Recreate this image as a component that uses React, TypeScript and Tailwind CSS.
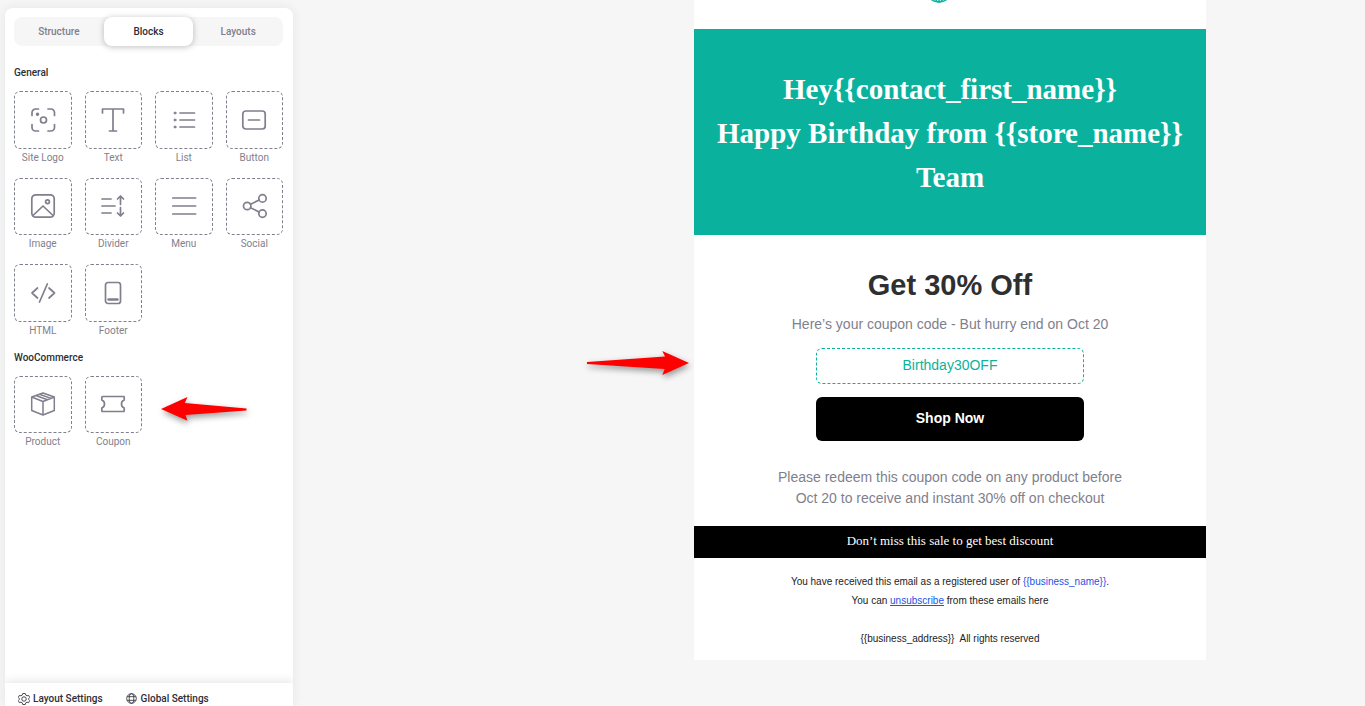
import React, { useState } from 'react';

type Block = {
  label: string;
  icon: React.ReactNode;
};

const generalBlocks: Block[] = [
  {
    label: 'Site Logo',
    icon: (
      <>
        <path d="M1 7.5V4.5A3.5 3.5 0 0 1 4.5 1h3M17 1h3A3.5 3.5 0 0 1 23.500 4.500V7.500M23.500 16.500v3a3.500 3.500 0 0 1-3.500 3.500h-3M7.500 23H4.500A3.500 3.500 0 0 1 1 19.500v-3" />
        <circle cx="12.5" cy="12" r="3" />
        <circle cx="6.5" cy="6.3" r="0.9" fill="currentColor" />
      </>
    ),
  },
  {
    label: 'Text',
    icon: <path d="M1.5 5V1h21v4M12 1v22M8.5 23h7" />,
  },
  {
    label: 'List',
    icon: (
      <>
        <path d="M8 5h14.5M8 12h14.5M8 19h14.5" />
        <g fill="currentColor" strokeWidth="1">
          <circle cx="3" cy="5" r="1" />
          <circle cx="3" cy="12" r="1" />
          <circle cx="3" cy="19" r="1" />
        </g>
      </>
    ),
  },
  {
    label: 'Button',
    icon: (
      <>
        <rect x="0.8" y="3" width="22.4" height="18" rx="3" />
        <path d="M6.5 12h11" />
      </>
    ),
  },
  {
    label: 'Image',
    icon: (
      <>
        <rect x="0.8" y="0.8" width="22.4" height="22.4" rx="4" />
        <circle cx="16.5" cy="7.8" r="1.9" />
        <path d="M2 21.5l10-9.5 10 9.5" />
      </>
    ),
  },
  {
    label: 'Divider',
    icon: (
      <>
        <path d="M1 5h9M1 12h13M1 19h9" />
        <path d="M19.5 10.5v-8M16.500 5l3-3 3 3M19.5 13.5v8M16.500 19l3 3 3-3" />
      </>
    ),
  },
  {
    label: 'Menu',
    icon: <path d="M0.8 4h22.8M0.8 12h22.8M0.8 20h22.8" />,
  },
  {
    label: 'Social',
    icon: (
      <>
        <circle cx="5.2" cy="12" r="3.7" />
        <circle cx="20.5" cy="4.4" r="3.7" />
        <circle cx="20.5" cy="19.6" r="3.7" />
        <path d="M8.5 10.3l8.7-4.3M8.5 13.7l8.7 4.3" />
      </>
    ),
  },
  {
    label: 'HTML',
    icon: <path d="M6.5 7L1 12l5.5 5M18 7l5.5 5-5.5 5M16.3 3L8.5 21" />,
  },
  {
    label: 'Footer',
    icon: (
      <>
        <rect x="4.5" y="1.5" width="15" height="21" rx="2.5" />
        <path d="M7.5 18.5h9" strokeWidth="2.4" />
      </>
    ),
  },
];

const wooBlocks: Block[] = [
  {
    label: 'Product',
    icon: (
      <path
        d="M12 1l11.300 4v13.500L12 23 .7 18.500V5zM.7 5L12 9.500 23.300 5M12 9.500V23M4.800 3.500l11.700 4.300M8.500 2.200l11.500 4.200"
        strokeWidth="1.5"
      />
    ),
  },
  {
    label: 'Coupon',
    icon: <path d="M1.5 4.5h21a.7.7 0 0 1 .7.7v2.800a4.300 4.300 0 0 0 0 8v2.800a.7.7 0 0 1-.7.7h-21a.7.7 0 0 1-.7-.7V16a4.300 4.300 0 0 0 0-8V5.200a.7.7 0 0 1 .7-.7z" />,
  },
];

const tabs = ['Structure', 'Blocks', 'Layouts'];

const BlockGrid: React.FC<{ blocks: Block[] }> = ({ blocks }) => (
  <div className="grid grid-cols-4 gap-[13px]">
    {blocks.map((block) => (
      <button key={block.label} type="button" className="flex flex-col items-center text-[#7f7f8d]">
        <span className="flex aspect-square w-full items-center justify-center rounded-md border border-dashed border-[#7f7f8d]">
          <svg
            viewBox="0 0 24 24"
            className="h-6 w-6 overflow-visible"
            fill="none"
            stroke="currentColor"
            strokeWidth="1.7"
            strokeLinecap="round"
            strokeLinejoin="round"
            aria-hidden="true"
          >
            {block.icon}
          </svg>
        </span>
        <span className="mt-px text-[10px] leading-[15px]">{block.label}</span>
      </button>
    ))}
  </div>
);

const Sidebar: React.FC = () => {
  const [activeTab, setActiveTab] = useState<string>('Blocks');

  return (
    <aside className="flex w-72 shrink-0 flex-col overflow-hidden rounded-t-lg bg-white font-['Roboto',sans-serif] shadow-[0_0_12px_rgba(30,40,60,0.08)]">
      <div className="flex-1 pt-[9px] pr-[10px] pl-[9px]">
        <div className="flex rounded-lg bg-[#f6f6f6]" role="tablist">
          {tabs.map((tab) => (
            <button
              key={tab}
              type="button"
              role="tab"
              aria-selected={tab === activeTab}
              onClick={() => setActiveTab(tab)}
              className={
                tab === activeTab
                  ? 'flex-1 rounded-lg bg-white py-[7px] text-[10px] leading-[15px] font-medium text-[#2d2d35] shadow-[0_1px_6px_rgba(0,0,0,0.25)]'
                  : 'flex-1 py-[7px] text-[10px] leading-[15px] font-medium text-[#7f7f8d]'
              }
            >
              {tab}
            </button>
          ))}
        </div>

        <h2 className="mt-[19px] mb-[11px] text-[10px] leading-[15px] font-medium text-[#2d2d35]">General</h2>
        <BlockGrid blocks={generalBlocks} />

        <h2 className="mt-3 mb-[11px] text-[10px] leading-[15px] font-medium text-[#2d2d35]">WooCommerce</h2>
        <div className="relative">
          <BlockGrid blocks={wooBlocks} />
          <svg
            viewBox="0 0 86 24"
            className="absolute top-[21px] left-[147px] h-6 w-[86px] overflow-visible drop-shadow-[1px_3px_3px_rgba(0,0,0,0.4)]"
            aria-hidden="true"
          >
            <path d="M0 12L26.5 0l-2.7 6L85.5 11.4v2L24.5 18l2 5.8z" fill="#ff0000" />
          </svg>
        </div>
      </div>

      <div className="flex gap-[23px] bg-white px-[13px] pt-2 shadow-[0_-2px_10px_rgba(0,0,0,0.1)]">
        <button type="button" className="flex items-center gap-[3px] text-[10px] leading-[15px] font-medium text-[#2d2d35]">
          <svg viewBox="0 0 24 24" className="h-3 w-3" fill="none" stroke="currentColor" strokeWidth="1.7" aria-hidden="true">
            <path d="M9.5 1h5l1 3.2 2.5 1.4 3.2-.8 2.3 4-2.2 2.6v1.2l2.2 2.6-2.3 4-3.2-.8-2.5 1.4-1 3.2h-5l-1-3.2L6 18.4l-3.2.8-2.3-4 2.2-2.6v-1.200L.5 8.800l2.300-4 3.200.8 2.500-1.400z" />
            <circle cx="12" cy="12" r="4.5" />
          </svg>
          Layout Settings
        </button>
        <button type="button" className="flex items-center gap-1 text-[10px] leading-[15px] font-medium text-[#2d2d35]">
          <svg viewBox="0 0 24 24" className="h-[11px] w-[11px]" fill="none" stroke="currentColor" strokeWidth="1.8" aria-hidden="true">
            <circle cx="12" cy="12" r="10.5" />
            <ellipse cx="12" cy="12" rx="5" ry="10.5" />
            <path d="M2.5 8h19M2.5 16h19" />
          </svg>
          Global Settings
        </button>
      </div>
    </aside>
  );
};

const EmailPreview: React.FC = () => (
  <article className="w-full max-w-lg bg-white text-center font-['Liberation_Sans',Arial,sans-serif]">
    {/* store logo, scrolled mostly out of view */}
    <header className="flex h-[29px] items-end justify-center overflow-hidden pr-[22px] pb-[26px]">
      <svg viewBox="0 0 28 28" className="h-7 w-7 shrink-0" fill="none" stroke="#0ab29e" strokeWidth="1.5" aria-hidden="true">
        <circle cx="14" cy="14" r="13" />
        <ellipse cx="14" cy="14" rx="6" ry="13" />
        <path d="M14 1v26M1 14h26M3 8h22M3 20h22" />
      </svg>
    </header>

    <h1 className="bg-[#0ab29e] px-4 pt-[38px] pb-9 font-['Liberation_Serif','Times_New_Roman',serif] text-[29px] leading-[44px] font-bold text-white">
      Hey{'{{contact_first_name}}'}
      <br />
      Happy Birthday from {'{{store_name}}'} Team
    </h1>

    <section className="flex flex-col items-center px-[72px] pt-7 pb-[17px] text-sm leading-[21px] text-[#7f7f8d]">
      <h2 className="text-[29px] leading-[44px] font-bold text-[#2f2f2f]">Get 30% Off</h2>
      <p className="mt-[7px]">Here’s your coupon code - But hurry end on Oct 20</p>
      <div className="relative mt-[13px] w-full max-w-[268px] rounded-md border border-dashed border-[#0ab29e] pt-1.5 pb-[7px] text-[#0ab29e]">
        Birthday30OFF
        <svg
          viewBox="0 0 102 24"
          className="absolute top-0.5 right-[394px] h-6 w-[102px] overflow-visible drop-shadow-[1px_3px_3px_rgba(0,0,0,0.4)]"
          aria-hidden="true"
        >
          <path d="M102 12L75.3 0l2.7 5.6L0 11v2l77.7 5-2.4 6z" fill="#ff0000" />
        </svg>
      </div>
      <a href="#shop" className="mt-[13px] w-full max-w-[268px] rounded-md bg-black pt-[11px] pb-3 font-bold text-white">
        Shop Now
      </a>
      <p className="mt-[26px]">
        Please redeem this coupon code on any product before Oct 20 to receive and instant 30% off on checkout
      </p>
    </section>

    <p className="bg-black pt-[5px] pb-2 font-['Liberation_Serif','Times_New_Roman',serif] text-[13px] leading-[19px] text-white">
      Don’t miss this sale to get best discount
    </p>

    <footer className="px-4 pt-[14px] pb-3 text-[10px] leading-[19px] text-[#222222]">
      <p>
        You have received this email as a registered user of <a href="#business" className="text-[#2451e6]">{'{{business_name}}'}</a>.
      </p>
      <p>
        You can <a href="#unsubscribe" className="text-[#2451e6] underline">unsubscribe</a> from these emails here
      </p>
      <p className="mt-[19px]">{'{{business_address}}'}&nbsp; All rights reserved</p>
    </footer>
  </article>
);

export default function App() {
  return (
    <div className="flex h-screen overflow-hidden bg-[#f6f6f6] pt-2 pl-[5px]">
      <Sidebar />
      <main className="-mt-2 flex flex-1 items-start justify-center pl-[242px]">
        <EmailPreview />
      </main>
    </div>
  );
}
